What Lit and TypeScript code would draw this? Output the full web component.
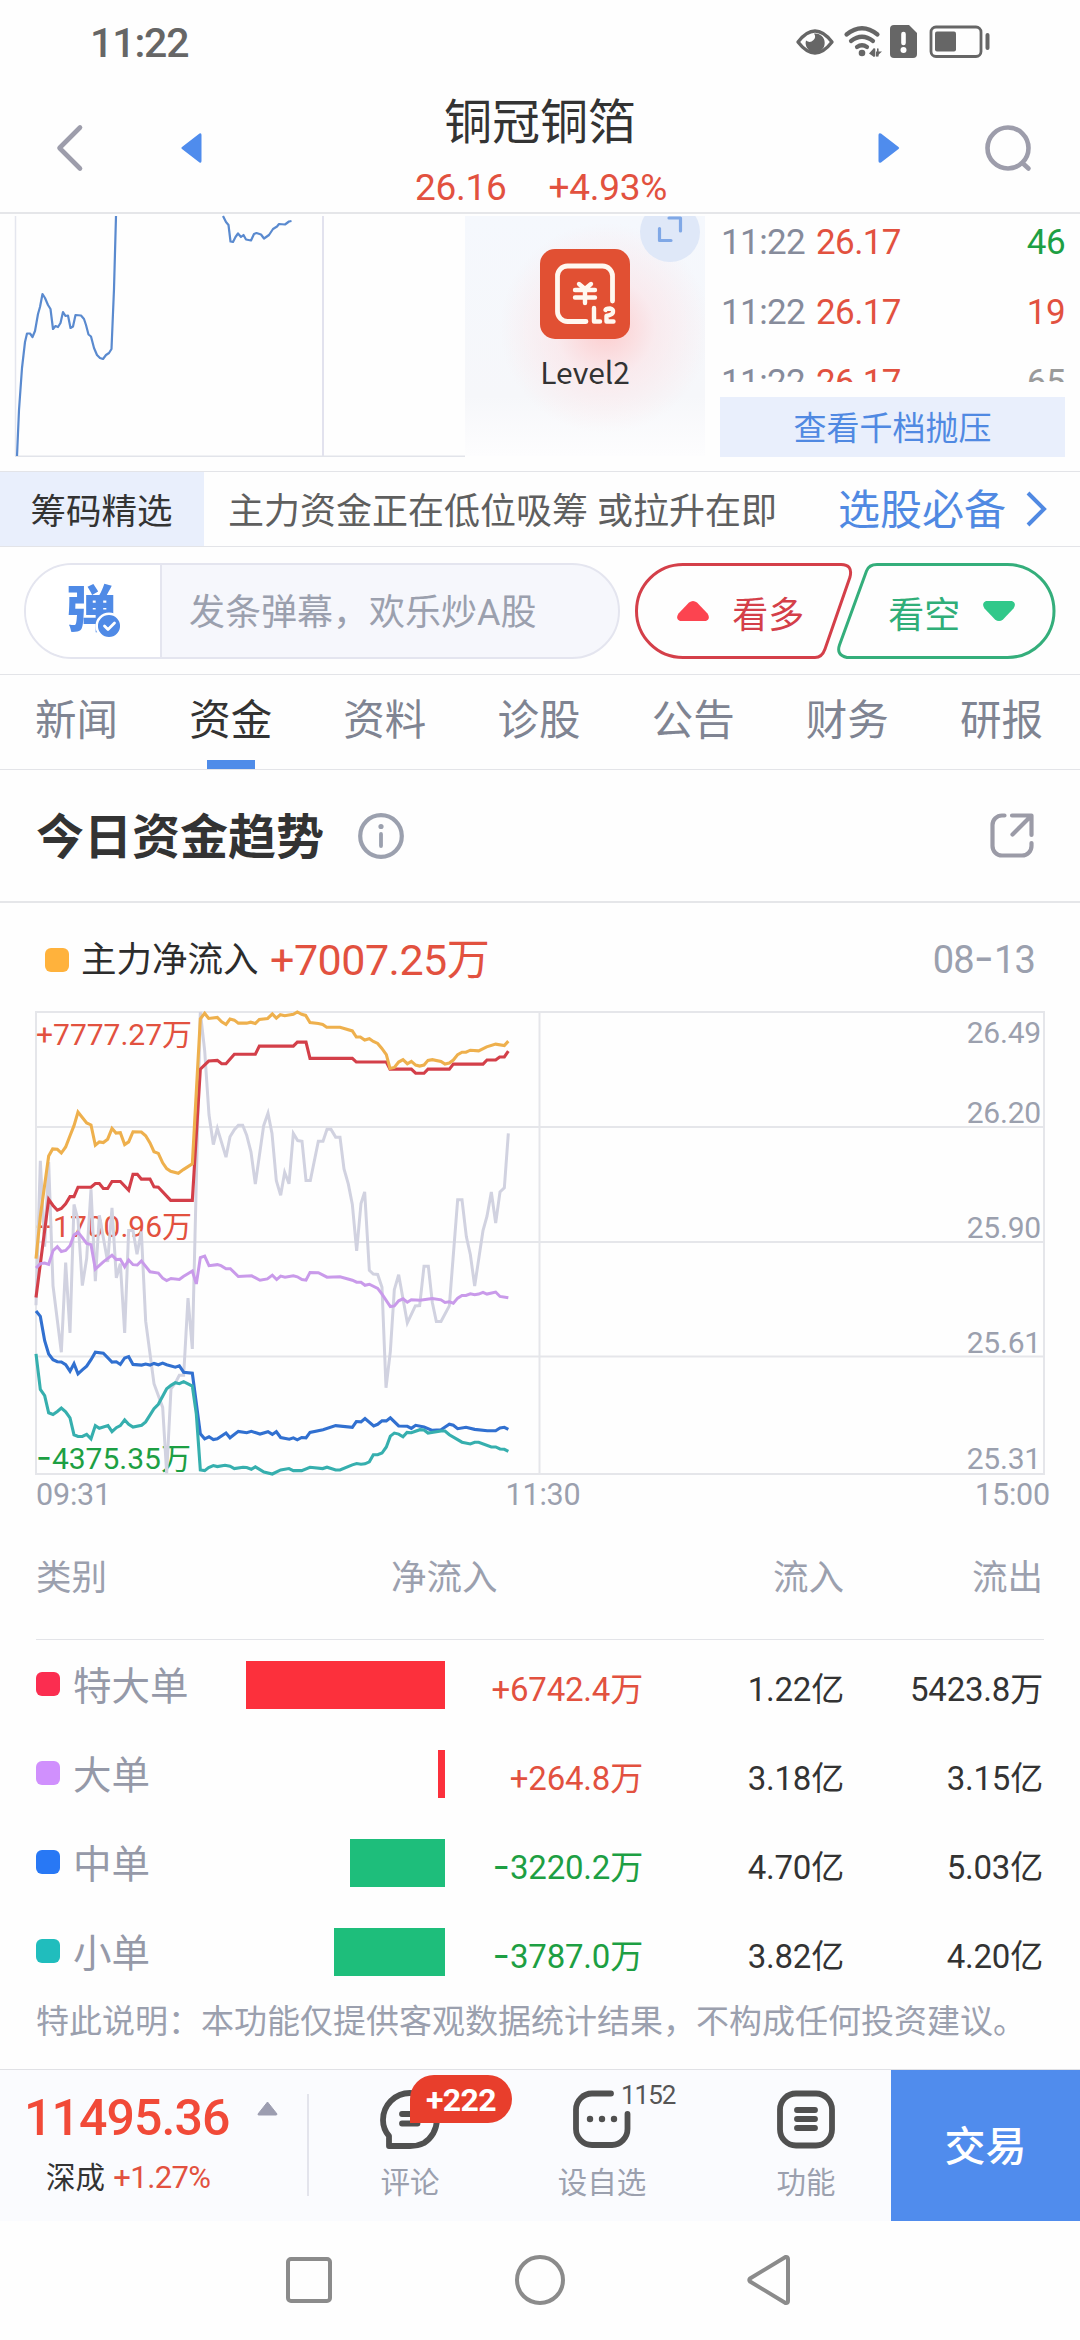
import { LitElement, html, css, svg, nothing } from "lit";
import { customElement, property } from "lit/decorators.js";
import { styleMap } from "lit/directives/style-map.js";
import { classMap } from "lit/directives/class-map.js";

const base = css`
  :host { display: block; font-family: Roboto, "Noto Sans CJK SC", sans-serif; color: #333; box-sizing: border-box; }
  * { box-sizing: border-box; }
  svg { display: block; flex: none; overflow: visible; }
  span, div { white-space: nowrap; }
  .up { color: #e2513f; }
  .down { color: #1d9f43; }
  .dash { font-family: Inter, sans-serif; letter-spacing: 0; font-size: 1.15em; line-height: 0; }
`;

const num = (s: string) => (s.includes("-") ? s.split("-").map((p, i) => (i ? html`<span class="dash">-</span>${p}` : p)) : s);

/* ---------- status bar ---------- */
@customElement("status-bar")
class StatusBar extends LitElement {
  static styles = [base, css`
    .bar { height: 84px; display: flex; align-items: center; justify-content: space-between; padding: 2px 89px 0 90px; }
    .time { font-size: 41px; font-weight: 500; color: #666; line-height: 48px; letter-spacing: -1.1px; }
  `];
  render() {
    return html`<div class="bar">
      <span class="time">11:22</span>
      <svg width="195" height="34" viewBox="796 25 195 34" fill="none" stroke="#666" stroke-linecap="round" stroke-linejoin="round">
        <path d="M798 41 Q815 19 832 41 Q815 63 798 41Z" stroke-width="3.4"/>
        <path d="M814 32.500 a9.500 9.500 0 1 1 -8 7 q4 3 7.500 -0.500 q3 -3 0.500 -6.500Z" fill="#666" stroke="none"/>
        <path d="M846.500 33.500 Q862 21 877.500 33.500" stroke-width="4.200"/>
        <path d="M851 40 Q862 31.500 873 40" stroke-width="4.200"/>
        <path d="M857 46 Q862 42.500 867 46" stroke-width="4.200"/>
        <circle cx="862" cy="52" r="3.300" fill="#666" stroke="none"/>
        <path d="M869 52.500 L874 47 V56 M877 47 V56 M876 50.500 H882 L876 56Z" fill="#666" stroke="none"/>
        <path d="M874.500 48 V55 M877.800 48 V55" stroke-width="1.600"/>
        <path d="M894 24 H909 L917 32 V53 a4 4 0 0 1 -4 4 H894 a4 4 0 0 1 -4 -4 V28 a4 4 0 0 1 4 -4Z" fill="#666" stroke="none"/>
        <path d="M903.500 33 V42" stroke="#fff" stroke-width="4.600"/>
        <circle cx="903.500" cy="49" r="3" fill="#fff" stroke="none"/>
        <rect x="931" y="26" width="50" height="29.500" rx="5" stroke-width="2.800"/>
        <rect x="935" y="30.500" width="21" height="20" rx="2" fill="#666" stroke="none"/>
        <path d="M987.500 34 V47" stroke-width="4"/>
      </svg>
    </div>`;
  }
}

/* ---------- stock header ---------- */
@customElement("stock-header")
class StockHeader extends LitElement {
  static styles = [base, css`
    .head { height: 130px; display: grid; grid-template-columns: 57px 123px 698px 107px 95px; border-bottom: 2px solid #e5e6e9; }
    .center { display: flex; }
    .ic { padding-top: 41px; }
    .mid { flex: 1; margin-left: -1px; display: flex; flex-direction: column; align-items: center; padding-top: 9px; }
    .name { font-size: 48px; line-height: 60px; }
    .quote { display: flex; gap: 42px; font-size: 37px; line-height: 44px; margin-top: 13px; margin-left: 2px; letter-spacing: -0.3px; }
  `];
  render() {
    return html`<div class="head">
      <div></div>
      <div class="ic"><svg width="26" height="46" viewBox="57 125 26 46"><path d="M80 127.500 L59.500 148 L80 168.500" fill="none" stroke="#9d9dab" stroke-width="4.600" stroke-linecap="round" stroke-linejoin="round"/></svg></div>
      <div class="center">
        <div class="ic"><svg width="23" height="46" viewBox="180 125 23 46"><path d="M182 147 L199.500 133.500 Q201.500 132.500 201.500 135 V161 Q201.500 163.500 199.500 162.500 L182 149 Q180.500 148 182 147Z" fill="#4f8ced"/></svg></div>
        <div class="mid">
          <span class="name">铜冠铜箔</span>
          <div class="quote up"><span>26.16</span><span>+4.93%</span></div>
        </div>
      </div>
      <div class="ic"><svg width="23" height="46" viewBox="878 125 23 46"><path d="M898.500 147 L881 133.500 Q878.500 132.500 878.500 135 V161 Q878.500 163.500 881 162.500 L898.500 149 Q900 148 898.500 147Z" fill="#4f8ced"/></svg></div>
      <div class="ic"><svg width="46" height="46" viewBox="985 125 46 46" fill="none" stroke="#9d9dab" stroke-width="4.600" stroke-linecap="round"><circle cx="1008" cy="148" r="20.500"/><path d="M1023 163.500 L1028.500 168.500"/></svg></div>
    </div>`;
  }
}

/* ---------- minute chart strip ---------- */
@customElement("quote-strip")
class QuoteStrip extends LitElement {
  static styles = [base, css`
    .strip { height: 258px; display: flex; padding-top: 2px; border-bottom: 1px solid #e3e4e8; }
    .mini { width: 465px; height: 241px; }
    .level { position: relative; width: 240px; height: 240px; display: flex; flex-direction: column; align-items: center; padding-top: 33px; overflow: hidden;
      background: radial-gradient(circle at 140px 112px, rgba(255,190,190,.75), rgba(255,215,218,.4) 50px, rgba(255,235,236,0) 105px), linear-gradient(#f5f8fd, #f6f7fa 75%, #fdfdfe); }
    .expand { position: absolute; right: 5px; top: -14px; width: 60px; height: 60px; border-radius: 50%; background: #dfe8f8; display: flex; align-items: center; justify-content: center; }
    .level .label { font-family: "Noto Sans CJK SC", sans-serif; font-size: 30px; line-height: 40px; margin-top: 12px; letter-spacing: -0.1px; }
    .ticks { flex: 1; padding: 0 15px 0 15px; }
    .list { height: 166px; overflow: hidden; }
    .row { display: grid; grid-template-columns: 95px 1fr auto; height: 70px; font-size: 35px; line-height: 53px; padding: 0 0 0 1px; letter-spacing: -0.6px; }
    .t { color: #868b9b; }
    .flat { color: #9a9a9a; }
    .btn { height: 60px; background: #e9effc; color: #5089e2; font-size: 33px; line-height: 64px; text-align: center; margin-top: 15px; }
  `];
  render() {
    const rows = [["46", "down"], ["19", "up"], ["65", "flat"]];
    return html`<div class="strip">
      <svg class="mini" width="465" height="241" viewBox="0 216 465 241">
        <path d="M15.500 216 V456" stroke="#e4e6ee" fill="none" stroke-width="1.500"/>
        <path d="M323 216 V456" stroke="#e2e2ee" stroke-width="2"/>
        <path d="M15 456.300 H465" stroke="#e2e4ea" stroke-width="1.500"/>
        <path fill="none" stroke="#5a8acf" stroke-width="2.200" stroke-linejoin="round" d="M17 456 L19 410 L22 368 L25 342 L27 333.500 H30 L32.500 337 L35 331 L38 314 L40 307 L42.500 294 L45 298 L48 305 L50.500 309 L53 329 L55.500 326 L58 327 L60.500 323 L63 312 L65.500 316 L68 315.500 L70.500 328 L73 326.500 L75.500 315 L81 315.500 L84 319 L86 325 L88.500 334.500 L91 336.500 L94 348 L97 355 L100 358 L103 359 L106 355 L109 353 L111.500 349 L114 289 L116 216"/>
        <path fill="none" stroke="#5a8acf" stroke-width="2.200" stroke-linejoin="round" d="M223 216 L226 222 L228.500 225 L230.500 241.500 L233 242 L235.500 237 L238 233.500 L241 237 L243.500 235 L246 239.500 L251 240.500 L254 234 L256.500 233 L261 234.500 L264 238.500 L269 235 L273 229 L277 226.500 L279 224 L285 224.500 L289 221.500 L291.500 221"/>
      </svg>
      <div class="level">
        <div class="expand"><svg width="24" height="24" viewBox="0 0 24 24" fill="none" stroke="#80a8e6" stroke-width="3.200" stroke-linecap="round" stroke-linejoin="round"><path d="M11 -2 H22.500 V11 M1.500 8.500 V20.500 H13"/></svg></div>
        <svg width="90" height="90" viewBox="0 0 90 90" fill="none" stroke="#fff8f0" stroke-linecap="round" stroke-linejoin="round">
          <rect width="90" height="90" rx="15" fill="#e15033" stroke="none"/>
          <path d="M72.500 52 V27 a10 10 0 0 0 -10 -10 H27.500 a10 10 0 0 0 -10 10 V62.500 a10 10 0 0 0 10 10 H46" stroke-width="4.800"/>
          <path d="M39 35 L45 40 L51 35 M35 41 H55 M35 48.500 H55 M45 41 V54" stroke-width="4.400"/>
          <path d="M54 59 V72.500 H60 M65.500 61 Q66 59.500 70 59.500 Q73.500 60 73 63 Q73 65.500 66.500 67 V72.500 H73.500" stroke-width="4.400"/>
        </svg>
        <span class="label">Level2</span>
      </div>
      <div class="ticks">
        <div class="list">${rows.map(([v, c]) => html`<div class="row"><span class="t">11:22</span><span class="up">26.17</span><span class=${c}>${v}</span></div>`)}</div>
        <div class="btn">查看千档抛压</div>
      </div>
    </div>`;
  }
}

/* ---------- promo, bullet comment and tabs ---------- */
@customElement("action-area")
class ActionArea extends LitElement {
  static styles = [base, css`
    .promo { height: 75px; display: flex; border-bottom: 1px solid #e3e4e8; line-height: 80px; }
    .tag { width: 204px; background: #e9effc; font-size: 35.500px; text-align: center; padding-right: 1px; }
    .msg { font-size: 36px; color: #5f5f5f; margin-left: 24px; width: 587px; }
    .more { font-size: 42px; color: #5089e2; line-height: 78px; margin-left: 23px; }
    .chev { margin: 19px 0 0 20px; }
    .bullet { height: 128px; display: flex; align-items: center; padding: 0 24px; border-bottom: 1px solid #e3e4e8; }
    .input { width: 597px; height: 96px; border: 2px solid #e4e5ef; border-radius: 48px; overflow: hidden; display: flex; background: #f6f7fc; }
    .logo { width: 136px; background: #fff; border-right: 2px solid #e4e5ef; position: relative; font-size: 50px; font-weight: 900; color: #4f8ae6; line-height: 91px; padding-left: 40px; }
    .check { position: absolute; left: 70px; top: 48px; }
    .ph { font-size: 36px; line-height: 97px; color: #9ba0ae; margin-left: 27px; }
    .vote { position: relative; height: 96px; display: flex; align-items: center; font-size: 36px; }
    .vote span { padding-top: 2px; }
    .bull { width: 217px; margin-left: 15px; color: #d43f49; padding-left: 41px; gap: 22px; }
    .bear { width: 219px; margin-left: -15px; color: #2fae78; padding-left: 51px; gap: 22px; }
    .frame { position: absolute; left: 0; top: 0; }
    .tabs { height: 95px; display: flex; justify-content: space-between; padding: 0 37px 0 35px; border-bottom: 1px solid #e3e4e8; font-size: 41.500px; line-height: 92px; color: #7f8492; }
    .tab { display: flex; flex-direction: column; align-items: center; height: 94px; }
    .tab.on { color: #333; }
    .tab.on::after { content: ""; width: 48px; height: 9px; background: #4f8ce9; margin-top: -7px; flex: none; }
  `];
  render() {
    return html`
      <div class="promo">
        <div class="tag">筹码精选</div><div class="msg">主力资金正在低位吸筹 或拉升在即</div><div class="more">选股必备</div>
        <svg class="chev" width="20" height="36" viewBox="0 0 20 36"><path d="M2 2 L18 18 L2 34" fill="none" stroke="#5089e2" stroke-width="4"/></svg>
      </div>
      <div class="bullet">
        <div class="input">
          <div class="logo">弹<svg class="check" width="26" height="26" viewBox="0 0 26 26"><circle cx="13" cy="13" r="12.300" fill="#4f8ae6" stroke="#fff" stroke-width="2.500"/><path d="M8.500 13 L12 16.500 L18.500 10" fill="none" stroke="#fff" stroke-width="2.800" stroke-linecap="round" stroke-linejoin="round"/></svg></div>
          <div class="ph">发条弹幕，欢乐炒A股</div>
        </div>
        <div class="vote bull">
          <svg class="frame" width="217" height="96" viewBox="0 0 217 96"><path d="M48 1.500 H206 Q218 1.500 215 14 L190 86 Q187 94.500 180 94.500 H48 A46.500 46.500 0 0 1 48 1.500Z" fill="none" stroke="#d43f49" stroke-width="3"/></svg>
          <svg width="34" height="20" viewBox="0 0 34 20"><path d="M13 1.500 Q17 -1.500 21 1.500 L31.500 12.500 Q35 18 30 20 H4 Q-1 18 2.500 12.500Z" fill="#fc4450"/></svg>
          <span>看多</span>
        </div>
        <div class="vote bear">
          <svg class="frame" width="219" height="96" viewBox="0 0 219 96"><path d="M170.500 1.500 H40 Q32 1.500 29.500 8 L2.500 82 Q-1 92 10 94.500 H170.500 A46.500 46.500 0 0 0 170.500 1.500Z" fill="none" stroke="#34ae7b" stroke-width="3"/></svg>
          <span>看空</span>
          <svg width="34" height="20" viewBox="0 0 34 20"><path d="M13 18.500 Q17 21.500 21 18.500 L31.500 7.500 Q35 2 30 0 H4 Q-1 2 2.500 7.500Z" fill="#31c88a"/></svg>
        </div>
      </div>
      <div class="tabs">${["新闻", "资金", "资料", "诊股", "公告", "财务", "研报"].map((t, i) => html`<div class=${classMap({ tab: true, on: i === 1 })}>${t}</div>`)}</div>`;
  }
}

/* ---------- fund trend chart ---------- */
type Series = { color: string; width: number; points: string };
const SERIES: Series[] = [
  { color: "#d1d2e0", width: 3, points: "48,903 61,476 74,730 86,480 99,845 124,1042 137,777 150,985 162,605 174,650 187,845 200,765 213,560 226,832 238,637 263,775 276,615 289,822 301,780 314,985 326,682 339,682 351,752 364,685 377,950 402,1135 428,1205 440,1400 453,1150 466,1133 478,1110 491,1110 504,882 517,1032 541,36 554,150 567,340 580,428 592,380 618,465 630,405 643,384 655,371 668,371 680,400 693,450 706,545 731,372 744,335 756,395 769,535 782,578 794,510 807,544 820,395 833,416 846,418 858,534 871,534 895,418 909,418 921,383 933,383 947,406 960,406 972,500 985,545 997,605 1010,742 1023,602 1034,568 1048,800 1060,811 1073,812 1086,850 1098,1147 1111,1040 1123,857 1136,813 1162,955 1186,905 1199,904 1212,788 1225,788 1237,895 1249,951 1263,951 1288,905 1313,591 1326,591 1339,700 1351,753 1364,846 1389,682 1401,640 1414,568 1427,660 1440,568 1453,556 1465,395" },
  { color: "#d33f49", width: 3.1, points: "48,880 86,590 99,608 112,622 124,617 137,603 150,582 162,582 174,554 213,554 226,543 238,543 250,558 263,558 276,537 301,537 326,563 339,516 352,516 364,530 390,530 402,553 415,554 452,593 517,593 541,205 566,181 592,179 605,189 618,189 643,161 706,161 718,137 820,137 832,125 858,125 870,173 997,173 1009,184 1099,184 1110,205 1174,205 1187,217 1212,217 1224,205 1288,205 1300,190 1389,190 1401,178 1427,178 1439,169 1453,169 1465,152" },
  { color: "#c99aea", width: 3, points: "48,793 61,780 74,778 86,782 99,742 112,730 124,744 137,741 150,727 162,695 174,687 187,703 200,720 213,724 226,796 250,775 276,755 289,768 301,767 314,789 326,769 339,783 352,784 364,772 390,804 415,808 428,823 440,830 453,824 478,827 490,818 517,802 529,840 541,762 554,758 567,786 592,783 603,786 618,795 631,795 655,818 695,816 720,829 742,825 757,814 770,827 782,817 795,820 820,816 832,819 846,827 858,829 870,806 895,807 921,820 960,819 997,829 1010,835 1023,835 1035,844 1048,841 1073,853 1086,870 1111,907 1123,905 1136,890 1149,884 1162,894 1174,887 1200,888 1237,883 1263,887 1275,895 1288,893 1300,897 1313,882 1326,874 1338,874 1351,869 1364,872 1376,870 1389,865 1401,870 1427,864 1440,877 1465,881" },
  { color: "#3170d0", width: 3.1, points: "48,920 61,936 74,1008 86,1047 99,1064 112,1070 124,1071 137,1079 150,1098 162,1076 174,1106 187,1094 200,1083 213,1064 226,1042 250,1045 276,1071 289,1070 301,1078 314,1059 326,1055 339,1078 365,1080 377,1077 390,1080 402,1075 415,1079 428,1074 440,1079 466,1086 478,1082 491,1101 517,1104 541,1283 554,1298 567,1292 580,1300 592,1298 618,1281 630,1295 655,1276 680,1280 694,1276 720,1284 744,1277 757,1285 769,1277 782,1294 808,1299 820,1295 832,1301 845,1294 858,1295 870,1279 909,1271 947,1259 997,1264 1009,1247 1023,1248 1035,1238 1061,1260 1073,1255 1086,1245 1099,1245 1111,1236 1136,1260 1162,1261 1174,1267 1187,1258 1212,1263 1237,1273 1263,1271 1288,1255 1300,1258 1313,1268 1338,1264 1364,1270 1402,1274 1427,1274 1440,1266 1453,1264 1465,1270" },
  { color: "#36afae", width: 3.1, points: "48,1047 61,1152 74,1170 86,1221 99,1226 112,1217 124,1207 137,1218 150,1236 162,1286 174,1291 187,1291 200,1285 213,1298 226,1259 238,1267 264,1259 276,1277 289,1265 301,1259 314,1242 326,1255 339,1263 365,1258 377,1248 402,1209 415,1196 440,1150 453,1140 466,1132 478,1135 491,1129 517,1142 529,1225 541,1390 554,1392 566,1383 580,1377 592,1380 615,1376 630,1379 643,1386 669,1382 680,1383 694,1388 706,1381 732,1396 757,1402 782,1390 807,1386 820,1392 845,1392 870,1382 908,1386 921,1382 947,1390 960,1390 997,1375 1010,1371 1023,1373 1035,1372 1048,1366 1060,1345 1073,1345 1086,1340 1099,1322 1111,1290 1123,1281 1136,1284 1149,1292 1161,1279 1174,1280 1200,1271 1212,1272 1224,1281 1263,1275 1275,1275 1288,1286 1326,1308 1351,1313 1364,1308 1376,1308 1414,1322 1427,1322 1440,1328 1453,1329 1465,1335" },
  { color: "#eeb04d", width: 3.1, points: "48,765 61,640 86,462 98,441 112,442 124,453 137,435 150,402 162,372 174,332 200,364 213,370 226,430 238,420 250,422 263,412 276,380 288,394 301,393 314,428 326,420 339,390 364,391 377,402 390,423 402,449 415,454 428,482 440,499 452,507 475,513 490,502 517,485 541,56 554,40 566,55 592,52 605,65 618,73 630,57 643,60 655,69 680,69 692,66 706,70 718,58 743,55 757,42 769,54 781,44 794,47 820,43 832,36 845,43 857,46 870,67 895,70 908,73 920,81 960,81 997,92 1009,110 1021,110 1034,119 1048,115 1060,123 1073,129 1085,143 1099,162 1110,203 1123,200 1136,184 1149,177 1162,189 1174,182 1187,193 1199,196 1212,193 1224,179 1237,177 1263,182 1275,190 1288,187 1300,178 1313,162 1326,155 1338,155 1351,149 1376,151 1400,139 1427,131 1453,135 1465,122" },
];

@customElement("fund-trend")
class FundTrend extends LitElement {
  static styles = [base, css`
    .title { height: 133px; display: flex; align-items: center; padding: 0 46px 0 36px; border-bottom: 2px solid #e5e6e9; }
    .title b { font-size: 48px; font-weight: 700; line-height: 60px; flex: 1; display: flex; align-items: center; gap: 34px; }
    .title em { font-style: normal; padding-top: 4px; }
    .legend { height: 109px; display: flex; align-items: center; padding: 4px 45px 0 45px; line-height: 54px; }
    .sq { width: 24px; height: 24px; border-radius: 6px; background: #ffb23c; margin-right: 12px; }
    .lbl { font-size: 35.500px; color: #2c2c2c; width: 189px; }
    .val { font-size: 43px; flex: 1; letter-spacing: -0.5px; }
    .date { font-size: 38px; color: #9ba0ae; letter-spacing: -0.8px; }
    .plot { position: relative; height: 462px; margin: 0 36px; font-size: 30px; line-height: 36px; }
    .grid, .lines { position: absolute; left: 0; top: 0; width: 1008px; height: 462px; }
    .left, .right { position: absolute; }
    .left { left: 0; letter-spacing: 0; }
    .right { right: 3px; color: #9ba0ae; letter-spacing: -0.2px; }
    .xs { display: flex; justify-content: space-between; padding: 2px 30px 0 36px; height: 56px; font-size: 30.500px; line-height: 38px; color: #9ba0ae; letter-spacing: -0.2px; }
  `];
  render() {
    const left: [string, string, number][] = [["+7777.27万", "up", 5], ["+1700.96万", "up", 197], ["-4375.35万", "down", 429]];
    const right: [string, number][] = [["26.49", 3], ["26.20", 83], ["25.90", 198], ["25.61", 313], ["25.31", 429]];
    return html`
      <div class="title">
        <b><em>今日资金趋势</em>
          <svg width="46" height="46" viewBox="0 0 46 46" fill="none" stroke="#9ba0ae" stroke-width="4.200" stroke-linecap="round"><circle cx="23" cy="23" r="20.800"/><path d="M23 21 V33" stroke-width="3.800"/><circle cx="23" cy="13.500" r="2.600" fill="#9ba0ae" stroke="none"/></svg>
        </b>
        <svg width="44" height="45" viewBox="0 0 44 45" fill="none" stroke="#9b9ba7" stroke-width="4.200" stroke-linecap="round" stroke-linejoin="round"><path d="M14.500 2.500 H12 A9.500 9.500 0 0 0 2.500 12 V33 A9.500 9.500 0 0 0 12 42.500 H32 A9.500 9.500 0 0 0 41.500 33 V30 M22 2.500 H41.500 V22 M41 3 L22.500 21.500"/></svg>
      </div>
      <div class="legend"><i class="sq"></i><span class="lbl">主力净流入</span><span class="val up">+7007.25万</span><span class="date">${num("08-13")}</span></div>
      <div class="plot">
        <svg class="grid" viewBox="0 0 1008 462" fill="none" stroke="#e5e6ea" stroke-width="2"><rect x="0" y="0" width="1008" height="462"/><path d="M0 115 H1008 M0 230 H1008 M0 344.500 H1008 M503.500 0 V462"/></svg>
        ${left.map(([t, c, y]) => html`<span class="left ${c}" style=${styleMap({ top: y + "px" })}>${num(t)}</span>`)}
        ${right.map(([t, y]) => html`<span class="right" style=${styleMap({ top: y + "px" })}>${t}</span>`)}
        <svg class="lines" viewBox="48 36 3024 1366" preserveAspectRatio="none" fill="none">
          ${SERIES.map((s) => svg`<polyline points=${s.points} stroke=${s.color} stroke-width=${s.width} vector-effect="non-scaling-stroke"/>`)}
        </svg>
      </div>
      <div class="xs"><span>09:31</span><span>11:30</span><span>15:00</span></div>`;
  }
}

/* ---------- order table ---------- */
@customElement("order-table")
class OrderTable extends LitElement {
  static styles = [base, css`
    .wrap { padding: 0 36px; height: 539px; }
    .head, .row { display: grid; grid-template-columns: 151px 258px 198px 201px 199px 1px; align-items: center; }
    .head { height: 110px; color: #9ba0ae; font-size: 35.500px; padding-bottom: 21px; border-bottom: 1px solid #e3e4e8; }
    .head .net { grid-column: 2 / 4; padding-left: 204px; }
    .r { text-align: right; }
    .row { height: 89px; font-size: 33px; line-height: 50px; }
    .name { display: flex; align-items: center; font-size: 38.500px; color: #9599a8; padding-top: 4px; }
    .sq { width: 24px; height: 24px; border-radius: 6px; margin-right: 13px; margin-top: -5px; flex: none; }
    .bar { height: 48px; justify-self: end; }
    .num { text-align: right; padding-top: 11px; letter-spacing: -0.2px; }
    .note { font-size: 33px; line-height: 44px; color: #9ba0ae; margin-top: 4px; }
  `];
  render() {
    const rows = [
      ["特大单", "#fb2d50", 199, "+6742.4万", "1.22亿", "5423.8万"],
      ["大单", "#d090fd", 7, "+264.8万", "3.18亿", "3.15亿"],
      ["中单", "#2878f5", 95, "-3220.2万", "4.70亿", "5.03亿"],
      ["小单", "#20bdbd", 111, "-3787.0万", "3.82亿", "4.20亿"],
    ] as [string, string, number, string, string, string][];
    return html`<div class="wrap">
      <div class="head"><span>类别</span><span class="net">净流入</span><span class="r">流入</span><span class="r">流出</span></div>
      ${rows.map(([n, c, w, net, i, o]) => {
        const up = net.startsWith("+");
        return html`<div class="row">
          <span class="name"><i class="sq" style=${styleMap({ background: c })}></i>${n}</span>
          <span class="bar" style=${styleMap({ width: w + "px", background: up ? "#fc303c" : "#1ebe7b" })}></span>
          <span class="num ${up ? "up" : "down"}">${num(net)}</span><span class="num">${i}</span><span class="num">${o}</span>
        </div>`;
      })}
      <div class="note">特此说明：本功能仅提供客观数据统计结果，不构成任何投资建议。</div>
    </div>`;
  }
}

/* ---------- bottom bars ---------- */
@customElement("bar-item")
class BarItem extends LitElement {
  @property() label = "";
  @property() count = "";
  @property() badge = "";
  static styles = [base, css`
    .item { position: relative; display: flex; flex-direction: column; align-items: center; width: 100px; padding-top: 19px; }
    .lab { font-size: 29.500px; color: #9ba0ae; line-height: 40px; margin-top: 14px; }
    .count { position: absolute; left: 69px; top: 9px; font-size: 26px; line-height: 32px; color: #555; letter-spacing: -1px; }
    .badge { position: absolute; left: 50px; top: 5px; width: 102px; height: 48px; border-radius: 24px 24px 24px 0; background: #e83e2c; color: #fff; font-size: 32px; font-weight: 700; line-height: 51px; text-align: center; letter-spacing: -0.6px; }
  `];
  render() {
    return html`<div class="item"><slot></slot><span class="lab">${this.label}</span>
      ${this.count ? html`<span class="count">${this.count}</span>` : nothing}
      ${this.badge ? html`<span class="badge">${this.badge}</span>` : nothing}</div>`;
  }
}

@customElement("bottom-bar")
class BottomBar extends LitElement {
  static styles = [base, css`
    .bar { height: 152px; display: flex; background: #fafbfe; border-top: 1px solid #e0e1e5; }
    .index { width: 307px; padding: 20px 0 0 24px; }
    .big { display: flex; font-size: 50px; font-weight: 500; line-height: 56px; color: #f14a38; letter-spacing: -0.9px; }
    .tri { margin: 11px 0 0 27px; }
    .sub { font-size: 29.500px; line-height: 40px; margin-top: 12px; padding-left: 22px; }
    .sub .up { font-size: 31px; margin-left: 1px; letter-spacing: -0.6px; }
    .sep { width: 2px; height: 102px; background: #e3e4ec; margin-top: 24px; }
    .items { display: flex; flex: 1; padding-left: 51px; }
    .a { margin-right: 92px; }
    .b { margin-right: 104px; }
    .trade { width: 189px; background: #508ced; color: #fff; font-size: 41px; font-weight: 500; text-align: center; line-height: 154px; }
    .nav { height: 119px; display: flex; justify-content: space-between; padding: 34px 290px 0 286px; }
  `];
  render() {
    return html`<div class="bar">
        <div class="index">
          <div class="big"><span>11495.36</span><svg class="tri" width="21" height="15" viewBox="0 0 21 15"><path d="M10.500 1 L20 13 Q20 14 19 14 H2 Q0.500 14 1 13Z" fill="#9c9db0" stroke="#9c9db0" stroke-linejoin="round"/></svg></div>
          <div class="sub">深成 <span class="up">+1.27%</span></div>
        </div>
        <div class="sep"></div>
        <div class="items">
          <bar-item class="a" label="评论" badge="+222"><svg width="60" height="60" viewBox="0 0 60 60" fill="none" stroke="#505050" stroke-width="5.800" stroke-linecap="round" stroke-linejoin="round"><path d="M9 57 V47 Q3 40 3 31 A27 27 0 0 1 57 31 Q56 46 44 54 Q38 57 30 57Z"/><path d="M22 25 H38 M22 34.500 H37.500"/></svg></bar-item>
          <bar-item class="b" label="设自选" count="1152"><svg width="60" height="60" viewBox="0 0 60 60" fill="none" stroke="#505050" stroke-width="5.800" stroke-linecap="round"><path d="M39 4.500 H20 A16 16 0 0 0 4 20.500 V40 A16 16 0 0 0 20 56 H40 A16 16 0 0 0 55.500 40 V25"/><g fill="#505050" stroke="none"><circle cx="18" cy="30" r="3.200"/><circle cx="30" cy="30" r="3.200"/><circle cx="42" cy="30" r="3.200"/></g></svg></bar-item>
          <bar-item label="功能"><svg width="60" height="60" viewBox="0 0 60 60" fill="none" stroke="#505050" stroke-width="5.800" stroke-linecap="round"><rect x="4" y="4.500" width="52" height="52" rx="16"/><path d="M21 21 H39 M21 30 H39 M21 39 H39"/></svg></bar-item>
        </div>
        <div class="trade">交易</div>
      </div>
      <div class="nav">
        <svg width="46" height="50" viewBox="0 0 46 50"><rect x="2" y="4" width="42" height="42" rx="3" fill="none" stroke="#8b8b8b" stroke-width="4"/></svg>
        <svg width="50" height="50" viewBox="0 0 50 50"><circle cx="25" cy="25" r="23" fill="none" stroke="#8b8b8b" stroke-width="4"/></svg>
        <svg width="43" height="50" viewBox="0 0 43 50"><path d="M38.500 2 L3 23.500 Q1.500 25 3 26.500 L38.500 48 Q41 48.500 41 46 V4 Q41 1.500 38.500 2Z" fill="none" stroke="#8b8b8b" stroke-width="4" stroke-linejoin="round"/></svg>
      </div>`;
  }
}

@customElement("app-root")
class AppRoot extends LitElement {
  static styles = [base, css`
    :host { width: 1080px; height: 2340px; background: #fefefe; overflow: hidden; }
  `];
  render() {
    return html`<status-bar></status-bar><stock-header></stock-header><quote-strip></quote-strip><action-area></action-area><fund-trend></fund-trend><order-table></order-table><bottom-bar></bottom-bar>`;
  }
}
